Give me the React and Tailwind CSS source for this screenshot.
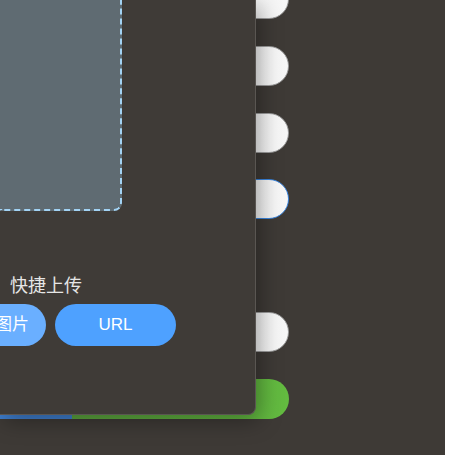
const rows = [
  { top: "-mt-[21px]", focus: false },
  { top: "mt-[27px]", focus: false },
  { top: "mt-[27px]", focus: false },
  { top: "mt-[26px]", focus: true },
  { top: "mt-[93px]", focus: false },
]

export default function App() {
  return (
    <div className="w-[474px] h-[455px] bg-white overflow-hidden font-['Liberation_Sans','Noto_Sans_CJK_SC',sans-serif]">
      <div className="relative w-[445px] h-[455px] bg-[#3e3a36] overflow-hidden">
        {/* form behind the dialog */}
        <div className="flex flex-col w-[289px]">
          {rows.map((row, i) => (
            <div
              key={i}
              className={`${row.top} h-[40px] w-full rounded-r-[20px] bg-gradient-to-r from-[#e4e4e4] to-[#f7f7f7] ${
                row.focus ? "border-[1.5px] border-[#3a86e0]" : "border border-[#9c9c9c]"
              }`}
            ></div>
          ))}
          <div className="mt-[27px] h-[40px] w-full rounded-r-[20px] bg-gradient-to-r from-[#5a9e3e] to-[#63bb40] flex items-end overflow-hidden">
            <div className="w-[72px] h-[4px] bg-[#3f7fd0]"></div>
          </div>
        </div>

        {/* upload dialog */}
        <div className="absolute left-0 top-0 w-[256px] h-[415px] bg-[#3f3b37] rounded-br-lg border-r border-b border-[#5a5652] shadow-[4px_6px_22px_rgba(0,0,0,0.35)] flex flex-col">
          <div className="w-[122px] h-[211px] bg-[#5f6b72] border-r-2 border-b-2 border-dashed border-[#a2d3f4] rounded-br-lg"></div>
          <div className="mt-[63px] pl-[10px] text-[18px] leading-[24px] text-[#e6e6e6]">快捷上传</div>
          <div className="mt-[6px] flex items-center gap-[9px]">
            <div className="-ml-[22px] w-[68px] h-[42px] rounded-full bg-[#6aafff] text-white text-[17px] flex items-center justify-center">
              图片
            </div>
            <div className="w-[121px] h-[42px] rounded-full bg-[#4ea1ff] text-white text-[17px] font-medium flex items-center justify-center">
              URL
            </div>
          </div>
        </div>
      </div>
    </div>
  )
}
